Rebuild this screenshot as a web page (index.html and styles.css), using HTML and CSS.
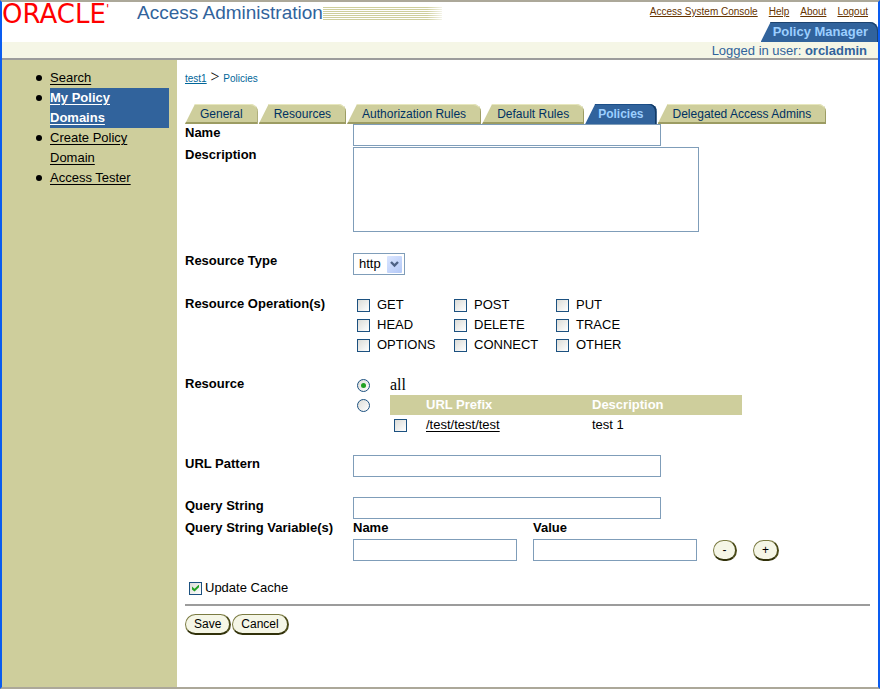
FILE: index.html
```html
<!DOCTYPE html>
<html lang="en">
<head>
  <meta charset="UTF-8">
  <meta name="viewport" content="width=device-width, initial-scale=1.0">
  <title>Access Administration - Policies</title>
  <link rel="stylesheet" href="styles.css">
</head>
<body>
  <header class="masthead">
    <div class="brand">
      <span class="logo">ORACLE<span class="mark">'</span></span>
      <span class="product">Access Administration</span>
      <span class="stripes"></span>
    </div>
    <div class="tools">
      <nav class="links">
        <a href="#">Access System Console</a>
        <a href="#">Help</a>
        <a href="#">About</a>
        <a href="#">Logout</a>
      </nav>
      <div class="app-tab">Policy Manager</div>
    </div>
  </header>
  <div class="user-bar">Logged in user: <b>orcladmin</b></div>

  <div class="layout">
    <aside class="sidebar">
      <ul>
        <li><a href="#">Search</a></li>
        <li class="current"><a href="#">My Policy Domains</a></li>
        <li><a href="#">Create Policy Domain</a></li>
        <li><a href="#">Access Tester</a></li>
      </ul>
    </aside>

    <main class="content">
      <div class="crumbs"><a href="#">test1</a> <span class="sep">&gt;</span> <span>Policies</span></div>

      <nav class="tabs">
        <a href="#" class="tab">General</a>
        <a href="#" class="tab">Resources</a>
        <a href="#" class="tab">Authorization Rules</a>
        <a href="#" class="tab">Default Rules</a>
        <a href="#" class="tab active">Policies</a>
        <a href="#" class="tab">Delegated Access Admins</a>
      </nav>

      <form>
        <div class="row">
          <label class="name" for="name">Name</label>
          <input class="text" type="text" id="name">
        </div>
        <div class="row section">
          <label class="name" for="desc">Description</label>
          <textarea id="desc"></textarea>
        </div>
        <div class="row section">
          <label class="name" for="type">Resource Type</label>
          <div class="select">
            <select id="type"><option>http</option></select>
            <svg class="arrow" viewBox="0 0 15 17" width="15" height="17"><path d="M4 6l3.5 3.5L11 6" fill="none" stroke="#4d6185" stroke-width="2.4"/></svg>
          </div>
        </div>
        <div class="row section">
          <span class="name">Resource Operation(s)</span>
          <div class="ops">
            <label><input type="checkbox">GET</label>
            <label><input type="checkbox">POST</label>
            <label><input type="checkbox">PUT</label>
            <label><input type="checkbox">HEAD</label>
            <label><input type="checkbox">DELETE</label>
            <label><input type="checkbox">TRACE</label>
            <label><input type="checkbox">OPTIONS</label>
            <label><input type="checkbox">CONNECT</label>
            <label><input type="checkbox">OTHER</label>
          </div>
        </div>
        <div class="row section">
          <span class="name">Resource</span>
          <div class="resource">
            <input type="radio" name="res" id="res-all" checked>
            <label class="all" for="res-all">all</label>
            <input type="radio" name="res" aria-label="Selected resources">
            <table>
              <thead>
                <tr><th class="pick"></th><th class="prefix">URL Prefix</th><th>Description</th></tr>
              </thead>
              <tbody>
                <tr>
                  <td class="pick"><input type="checkbox" aria-label="/test/test/test"></td>
                  <td><a href="#">/test/test/test</a></td>
                  <td>test 1</td>
                </tr>
              </tbody>
            </table>
          </div>
        </div>
        <div class="row section">
          <label class="name" for="pattern">URL Pattern</label>
          <input class="text" type="text" id="pattern">
        </div>
        <div class="row">
          <label class="name" for="query">Query String</label>
          <input class="text" type="text" id="query">
        </div>
        <div class="row">
          <span class="name">Query String Variable(s)</span>
          <div class="vars">
            <div class="var">
              <label class="name" for="var-name">Name</label>
              <input class="text" type="text" id="var-name">
            </div>
            <div class="var">
              <label class="name" for="var-value">Value</label>
              <input class="text" type="text" id="var-value">
            </div>
            <button type="button" class="pill small">-</button>
            <button type="button" class="pill small plus">+</button>
          </div>
        </div>
        <label class="cache"><input type="checkbox" checked>Update Cache</label>
        <div class="buttons">
          <button type="submit" class="pill">Save</button>
          <button type="button" class="pill">Cancel</button>
        </div>
      </form>
    </main>
  </div>
</body>
</html>
```
FILE: styles.css
```css
:root {
  --khaki: #cece9c;
  --khaki-dark: #9c9c63;
  --cream: #f5f6e6;
  --blue: #31639c;
  --light-blue: #9ccfff;
  --navy: #003163;
  --field: #7f9db9;
  --brown: #663300;
}
* { box-sizing: border-box; }
body {
  margin: 0;
  min-height: 100vh;
  display: flex;
  flex-direction: column;
  border: 2px solid #0a5cf0;
  border-top-color: #aca899;
  border-bottom-color: #aca899;
  background: #fff;
  color: #000;
  font: 13px/20px "Liberation Sans", Arial, sans-serif;
}
input, select, textarea, button { font: inherit; color: inherit; margin: 0; }

/* Header */
.masthead {
  display: flex;
  justify-content: space-between;
  height: 40px;
}
.brand { display: flex; }
.logo {
  min-width: 135px;
  color: #f00;
  font: 26px/24px "DejaVu Sans", sans-serif;
}
.mark { font-size: 12px; vertical-align: top; line-height: 14px; }
.product { color: var(--blue); font-size: 19px; line-height: 21px; }
.stripes {
  width: 119px;
  height: 13px;
  margin-top: 5px;
  background: repeating-linear-gradient(#cece9c 0 1px, #fff 1px 2px);
  -webkit-mask-image: linear-gradient(90deg, #000 104px, transparent 124px);
  mask-image: linear-gradient(90deg, #000 104px, transparent 124px);
}
.tools { display: flex; flex-direction: column; align-items: flex-end; justify-content: space-between; }
.links { display: flex; gap: 11px; padding-right: 10px; font-size: 10px; line-height: 20px; }
.links a { color: var(--brown); }
.app-tab {
  padding: 0 10px 0 12px;
  background: var(--blue);
  color: var(--light-blue);
  font-weight: bold;
  line-height: 20px;
  border-radius: 0 8px 0 0;
  clip-path: polygon(10px 0, 100% 0, 100% 100%, 0 100%);
  box-shadow: inset -1px 1px #1c436f;
}
.user-bar {
  height: 18px;
  padding-right: 11px;
  background: var(--cream);
  border-bottom: 2px solid #9c9c9c;
  color: var(--blue);
  line-height: 17px;
  text-align: right;
}

/* Sidebar */
.layout { display: flex; flex: 1; }
.sidebar { width: 175px; padding: 8px 8px 0 0; background: var(--khaki); }
.sidebar ul { margin: 0; padding-left: 48px; list-style: none; }
.sidebar li { position: relative; padding-right: 20px; }
.sidebar li::before {
  content: '';
  position: absolute;
  left: -14px;
  top: 7px;
  width: 6px;
  height: 6px;
  border-radius: 3px;
  background: #000;
}
.sidebar a { color: #000; text-underline-offset: 2px; }
.sidebar .current { background: var(--blue); }
.sidebar .current a { color: #fff; font-weight: bold; }

/* Breadcrumbs and tabs */
.content { flex: 1; padding: 8px 8px 0; }
.crumbs { margin-bottom: 15px; color: #006699; font-size: 10px; }
.crumbs a { color: #006699; }
.crumbs .sep { margin: 0 1px; color: #000; font: 16px/18px "Liberation Serif", serif; }
.tabs { display: flex; gap: 1px; }
.tab {
  height: 20px;
  padding: 0 15px;
  background: var(--khaki);
  color: var(--navy);
  font-size: 12px;
  line-height: 21px;
  text-decoration: none;
  white-space: nowrap;
  border-radius: 0 8px 0 0;
  clip-path: polygon(10px 0, 100% 0, 100% 100%, 0 100%);
  box-shadow: inset -1px -2px var(--khaki-dark), inset 0 1px #e7e7bd;
}
.tab.active {
  padding: 0 13px;
  background: var(--blue);
  color: var(--light-blue);
  font-weight: bold;
  box-shadow: inset -2px 0 #123a66, inset 0 1px #1c4f88;
}

/* Form */
.row { display: grid; grid-template-columns: 168px 1fr; align-items: start; }
.section { margin-bottom: 20px; }
.name { font-weight: bold; line-height: 18px; }
.text, textarea {
  width: 100%;
  max-width: 308px;
  height: 22px;
  padding: 1px 3px;
  border: 1px solid var(--field);
  background: #fff;
}
textarea { max-width: 346px; height: 85px; margin-top: 1px; resize: none; }
.select { position: relative; width: 52px; height: 22px; margin-top: 1px; }
select {
  width: 100%;
  height: 100%;
  padding: 0 0 0 5px;
  appearance: none;
  border: 1px solid var(--field);
  border-radius: 0;
  background: #fff;
}
.arrow {
  position: absolute;
  top: 3px;
  right: 3px;
  border-radius: 1px;
  background: linear-gradient(135deg, #dbe6ff, #b3c8f7);
  pointer-events: none;
}
input[type=checkbox], input[type=radio] {
  display: grid;
  place-content: center;
  flex: none;
  width: 13px;
  height: 13px;
  appearance: none;
  border: 1px solid #1c5180;
  background: linear-gradient(135deg, #dcdcd7, #fff);
}
input[type=radio] { border-radius: 50%; }
input:checked::after { content: ''; background: #21a121; }
input[type=radio]:checked::after { width: 5px; height: 5px; border-radius: 50%; }
input[type=checkbox]:checked::after {
  width: 7px;
  height: 7px;
  clip-path: polygon(0 28%, 36% 62%, 100% 0, 100% 40%, 36% 100%, 0 70%);
}
.ops {
  display: grid;
  grid-template-columns: 97px 102px 90px;
  padding-left: 4px;
}
.ops label { display: flex; align-items: center; gap: 7px; }
.resource {
  display: grid;
  grid-template-columns: 33px minmax(0, 352px);
  padding-left: 4px;
}
.resource > input { margin-top: 4px; }
.all { font: 16px/20px "Liberation Serif", serif; }
table { width: 100%; border-collapse: collapse; }
th, td { height: 20px; padding: 0; line-height: 18px; text-align: left; }
th { background: var(--khaki); color: #fff; }
.pick { width: 36px; padding-left: 4px; }
.prefix { width: 166px; }
td a { color: #000; text-underline-offset: 2px; }
.vars { display: flex; align-items: flex-end; gap: 16px; }
.var { display: flex; flex-direction: column; gap: 2px; width: 164px; }
.cache { display: flex; align-items: center; gap: 3px; margin: 17px 4px 6px; }
.buttons { display: flex; gap: 1px; padding-top: 8px; border-top: 2px solid #9c9c9c; }
.pill {
  height: 21px;
  padding: 0 8px;
  border: 1px solid #7b7b42;
  border-right: 2px solid #4a4a18;
  border-bottom: 2px solid #31310a;
  border-radius: 11px;
  background: var(--cream);
  font-size: 12px;
  line-height: 18px;
}
.small { width: 24px; padding: 0; line-height: 16px; }
.plus { width: 26px; }
```
